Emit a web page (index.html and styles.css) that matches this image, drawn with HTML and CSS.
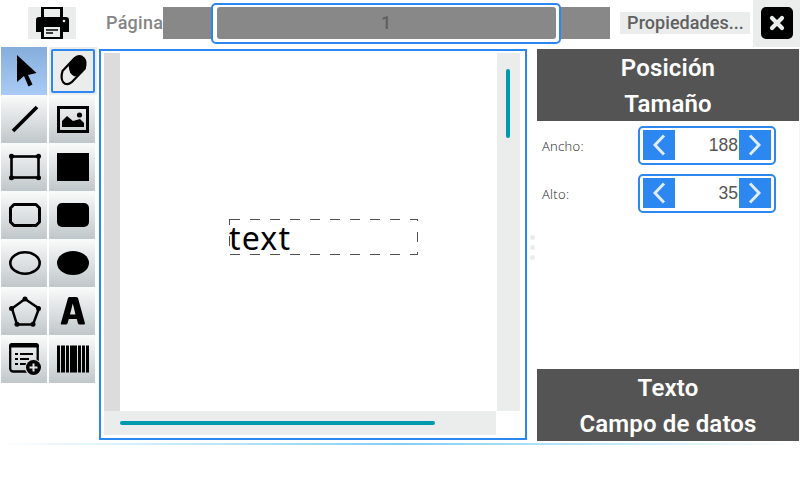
FILE: index.html
```html
<!DOCTYPE html>
<html lang="es">
<head>
<meta charset="utf-8">
<title>Editor</title>
<link rel="stylesheet" href="styles.css">
</head>
<body>
<header class="topbar">
  <button class="print"><svg width="48" height="32" viewBox="0 0 48 32"><path d="M13 0h22v10h3q3 0 3 3v12h-6v7H13v-7H8V13q0-3 3-3h2z"/><path fill="#ebecec" d="M16 2h16v8H16zM16 20h16v10H16z"/><circle cx="36" cy="14" r="1.3" fill="#ebecec"/><path d="M18 23h12M18 26h7" stroke="#000" stroke-width="1.3"/></svg></button>
  <span class="page-label">Página</span>
  <div class="page-bar"><div class="page-focus"><div class="page-value">1</div></div></div>
  <button class="props">Propiedades...</button>
  <button class="close"><svg width="32" height="32" viewBox="0 0 32 32"><rect width="32" height="32" rx="5"/><path d="M11 11l10 10M21 11L11 21" stroke="#ebecec" stroke-width="4.2" stroke-linecap="round"/></svg></button>
</header>
<main class="work">
  <nav class="tools">
    <button class="tool selected"><svg viewBox="0 0 46 48"><path d="M16 8v27l7-6 4.500 10.500 4-2-4.500-9.500 8.500-2z"/></svg></button>
    <button class="tool focused"><svg viewBox="0 0 44 44"><path d="M11.500 21.500L23.500 9Q28.500 5 32.500 9Q35.500 12.500 33.500 19.500L20.500 33Q15.500 37 12 33Q9 29 11.500 21.500z" fill="#ebecec" stroke="#000" stroke-width="2.200"/><path d="M17.500 15.500L23.500 9Q28.500 5 32.500 9Q35.500 12.500 33.500 19.500L26.500 27Q22 28 19 23.500Q17.500 20 17.500 15.500z"/></svg></button>
    <button class="tool"><svg viewBox="0 0 46 48"><path d="M12 36l24-24" stroke="#000" stroke-width="3.800"/></svg></button>
    <button class="tool"><svg viewBox="0 0 46 48"><rect x="9.500" y="12.500" width="29" height="24" fill="none" stroke="#000" stroke-width="3"/><path d="M13 32v-6l5-5 6 5 7-2 4 4v4z"/><circle cx="30.500" cy="20" r="2.600"/></svg></button>
    <button class="tool"><svg viewBox="0 0 46 48"><rect x="10.500" y="13.500" width="27" height="21" fill="none" stroke="#000" stroke-width="2.600"/><circle cx="10.500" cy="13.300" r="2.500"/><circle cx="37.500" cy="13.300" r="2.500"/><circle cx="10.500" cy="34.700" r="2.500"/><circle cx="37.500" cy="34.700" r="2.500"/></svg></button>
    <button class="tool"><svg viewBox="0 0 46 48"><path d="M8 10h32v28H8z"/></svg></button>
    <button class="tool"><svg viewBox="0 0 46 48"><path d="M13 13.500h22l3.500 3.500v14l-3.500 3.500H13L9.500 31V17z" fill="none" stroke="#000" stroke-width="3" stroke-linejoin="round"/></svg></button>
    <button class="tool"><svg viewBox="0 0 46 48"><rect x="8" y="12" width="32" height="24" rx="5"/></svg></button>
    <button class="tool"><svg viewBox="0 0 46 48"><ellipse cx="24" cy="24" rx="14.700" ry="10.700" fill="none" stroke="#000" stroke-width="2.600"/></svg></button>
    <button class="tool"><svg viewBox="0 0 46 48"><ellipse cx="24" cy="24" rx="16" ry="12"/></svg></button>
    <button class="tool"><svg viewBox="0 0 46 48"><path d="M24 12l14 9.500-6 16H16l-5-16z" fill="none" stroke="#000" stroke-width="2.500"/><circle cx="24" cy="12" r="2.500"/><circle cx="37.500" cy="21.500" r="2.500"/><circle cx="32" cy="37.300" r="2.500"/><circle cx="16" cy="37.300" r="2.500"/><circle cx="10.500" cy="21.500" r="2.500"/></svg></button>
    <button class="tool"><svg viewBox="0 0 46 48"><path fill-rule="evenodd" d="M19 11q.5-1 1.500-1h6.500q1.500 0 2 1l7 25.500q0 1-1 1h-4.500q-1 0-1.500-1l-1.200-4.500h-8l-1.300 4.500q-.5 1-1.500 1h-4.500q-1 0-.7-1zM21 27.500h5.500l-2.700-11z"/></svg></button>
    <button class="tool"><svg viewBox="0 0 46 48"><rect x="9.200" y="9.500" width="27.500" height="27" rx="3" fill="none" stroke="#000" stroke-width="2.300"/><path d="M8 12.500V11q0-3 3-3h24q3 0 3 3v1.500z"/><path d="M14 19h3M14 24h3M14 29h3M19 19h13M19 24h9M19 29h6" stroke="#000" stroke-width="2"/><circle cx="32.500" cy="32.500" r="8.600" fill="#d5d9db"/><circle cx="32.500" cy="32.500" r="7.500"/><path d="M28.500 32.500h8M32.500 28.500v8" stroke="#e4e7e8" stroke-width="2"/></svg></button>
    <button class="tool"><svg viewBox="0 0 46 48"><path d="M8 10.500h3v27H8zM12 10.500h4v27h-4zM17 10.500h3v27h-3zM21 10.500h7v27h-7zM29 10.500h3v27h-3zM33 10.500h3v27h-3zM37 10.500h3v27h-3z"/></svg></button>
  </nav>
  <section class="canvas">
    <div class="ruler"></div>
    <div class="sheet"><div class="text-item"><svg width="190" height="37" viewBox="0 0 190 37"><path d="M1 .5h188M1 35.500h188" stroke-dasharray="10 10"/><path d="M.5 0v37" stroke-dasharray="6 11 10 10"/><path d="M188.500 0v37" stroke-dasharray="2 11 10 10"/></svg><span>text</span></div></div>
    <div class="vscroll"><div class="vthumb"></div></div>
    <div class="hscroll"><div class="hthumb"></div></div>
  </section>
  <div class="splitter"><i></i><i></i><i></i></div>
  <aside class="panel">
    <div class="heads"><h2>Posición</h2><h2>Tamaño</h2></div>
    <div class="fields">
      <div class="field"><label>Ancho:</label><div class="spin"><button><svg width="32" height="30"><path d="M21 5.500L12 15l9 9.500"/></svg></button><span>188</span><button><svg width="32" height="30"><path d="M11 5.500L20 15l-9 9.500"/></svg></button></div></div>
      <div class="field"><label>Alto:</label><div class="spin"><button><svg width="32" height="30"><path d="M21 5.500L12 15l9 9.500"/></svg></button><span>35</span><button><svg width="32" height="30"><path d="M11 5.500L20 15l-9 9.500"/></svg></button></div></div>
    </div>
    <div class="heads"><h2>Texto</h2><h2>Campo de datos</h2></div>
  </aside>
</main>
<div class="rule"></div>
</body>
</html>
```
FILE: styles.css
```css
* { box-sizing: border-box; }
body { margin: 0; width: 800px; height: 480px; overflow: hidden; background: #fff; font-family: Roboto, sans-serif; }
button { display: block; border: 0; padding: 0; margin: 0; font: inherit; background: none; }
svg { display: block; }
.topbar { display: flex; align-items: flex-start; height: 47px; padding-left: 28px; }
.print { width: 48px; height: 32px; margin-top: 7px; background: #ebecec; }
.page-label { width: 57px; margin: 7px 0 0 30px; line-height: 32px; font-size: 18px; font-weight: 500; color: #858585; white-space: nowrap; letter-spacing: .25px; }
.page-bar { width: 447px; height: 32px; margin-top: 7px; background: #888; padding-left: 48px; }
.page-focus { width: 350px; height: 41px; margin-top: -4px; padding: 2px 3px 3px 4px; border: 2px solid #2d87f0; border-radius: 5px; background: #fff; }
.page-value { height: 32px; padding-right: 1px; border-radius: 3px; background: #888; color: #606060; font-size: 18px; line-height: 32px; font-weight: 500; text-align: center; }
.props { width: 130px; height: 22px; margin: 12px 0 0 10px; background: #ebecec; color: #606060; font-size: 18px; font-weight: 500; line-height: 22px; letter-spacing: .05px; padding-left: 1px; white-space: nowrap; }
.close { display: flex; align-items: flex-start; width: 47px; height: 47px; margin-left: 3px; padding: 7px 0 8px 8px; background: #ebecec; }
.work { display: flex; height: 394px; }
.tools { display: grid; grid-template-columns: 46px 46px; grid-auto-rows: 48px; column-gap: 2px; width: 98px; padding-left: 1px; }
.tool { height: 48px; background: linear-gradient(#fafbfb, #c0c7ca); }
.tool svg { width: 46px; height: 48px; }
.tool.selected { background: linear-gradient(#86aedb, #a9cbf6); }
.tool.focused { width: 48px; background: #ebecec; padding: 0 2px; }
.tool.focused svg { width: 44px; height: 44px; border: 2px solid #2d87f0; border-radius: 2px; overflow: visible; }
.tool.focused path { transform: translate(-2px, -2px) scale(1.1); }
.canvas { display: grid; grid-template-columns: 16px 377px 23px; grid-template-rows: 358px 24px; width: 428px; height: 391px; margin: 2px 0 0 1px; padding: 2px 0 0 3px; border: 2px solid #2d87f0; }
.ruler { background: #dcdcdc; }
.sheet { padding: 166px 0 0 109px; }
.text-item { position: relative; width: 190px; height: 37px; }
.text-item svg { position: absolute; inset: 0; fill: none; stroke: #505050; stroke-width: 1; }
.text-item span { display: block; font: 32px/37px "Noto Sans", sans-serif; letter-spacing: 1.2px; color: #000; }
.vscroll { background: #ebecec; padding: 16px 0 0 9px; }
.vthumb { width: 4px; height: 69px; border-radius: 2px; background: #009aae; }
.hscroll { grid-column: 1 / 3; width: 392px; background: #ebecec; padding: 10px 0 0 16px; }
.hthumb { width: 315px; height: 4px; border-radius: 2px; background: #009aae; }
.splitter { display: flex; flex-direction: column; gap: 5px; width: 10px; padding: 188px 0 0 3px; }
.splitter i { width: 5px; height: 5px; border-radius: 50%; background: #ebecec; }
.panel { display: flex; flex-direction: column; width: 263px; padding-top: 2px; border-right: 1px solid #f5f5f5; }
.heads { height: 72px; background: #545454; color: #fff; text-align: center; }
.heads h2 { margin: 0; font-size: 24px; line-height: 36px; font-weight: 600; height: 36px; padding-top: 1px; letter-spacing: .15px; }
.fields { height: 248px; padding: 5px 0 0 5px; }
.field { display: flex; height: 48px; }
.field label { width: 96px; font: 300 13px/40px "Open Sans", sans-serif; letter-spacing: .3px; color: #222; }
.spin { display: flex; width: 138px; height: 39px; padding: 2px 3px; border: 2px solid #2d87f0; border-radius: 5px; }
.spin button { width: 32px; height: 30px; background: #2d87f0; }
.spin button svg { fill: none; stroke: #e0edfc; stroke-width: 2.9; }
.spin span { width: 64px; text-align: right; padding-right: 1px; font: 17.5px/30px "Liberation Sans", sans-serif; color: #555; }
.rule { height: 2px; margin-top: 2px; background: linear-gradient(90deg, #fff, #80d0f5 50%, #fff); }
```
